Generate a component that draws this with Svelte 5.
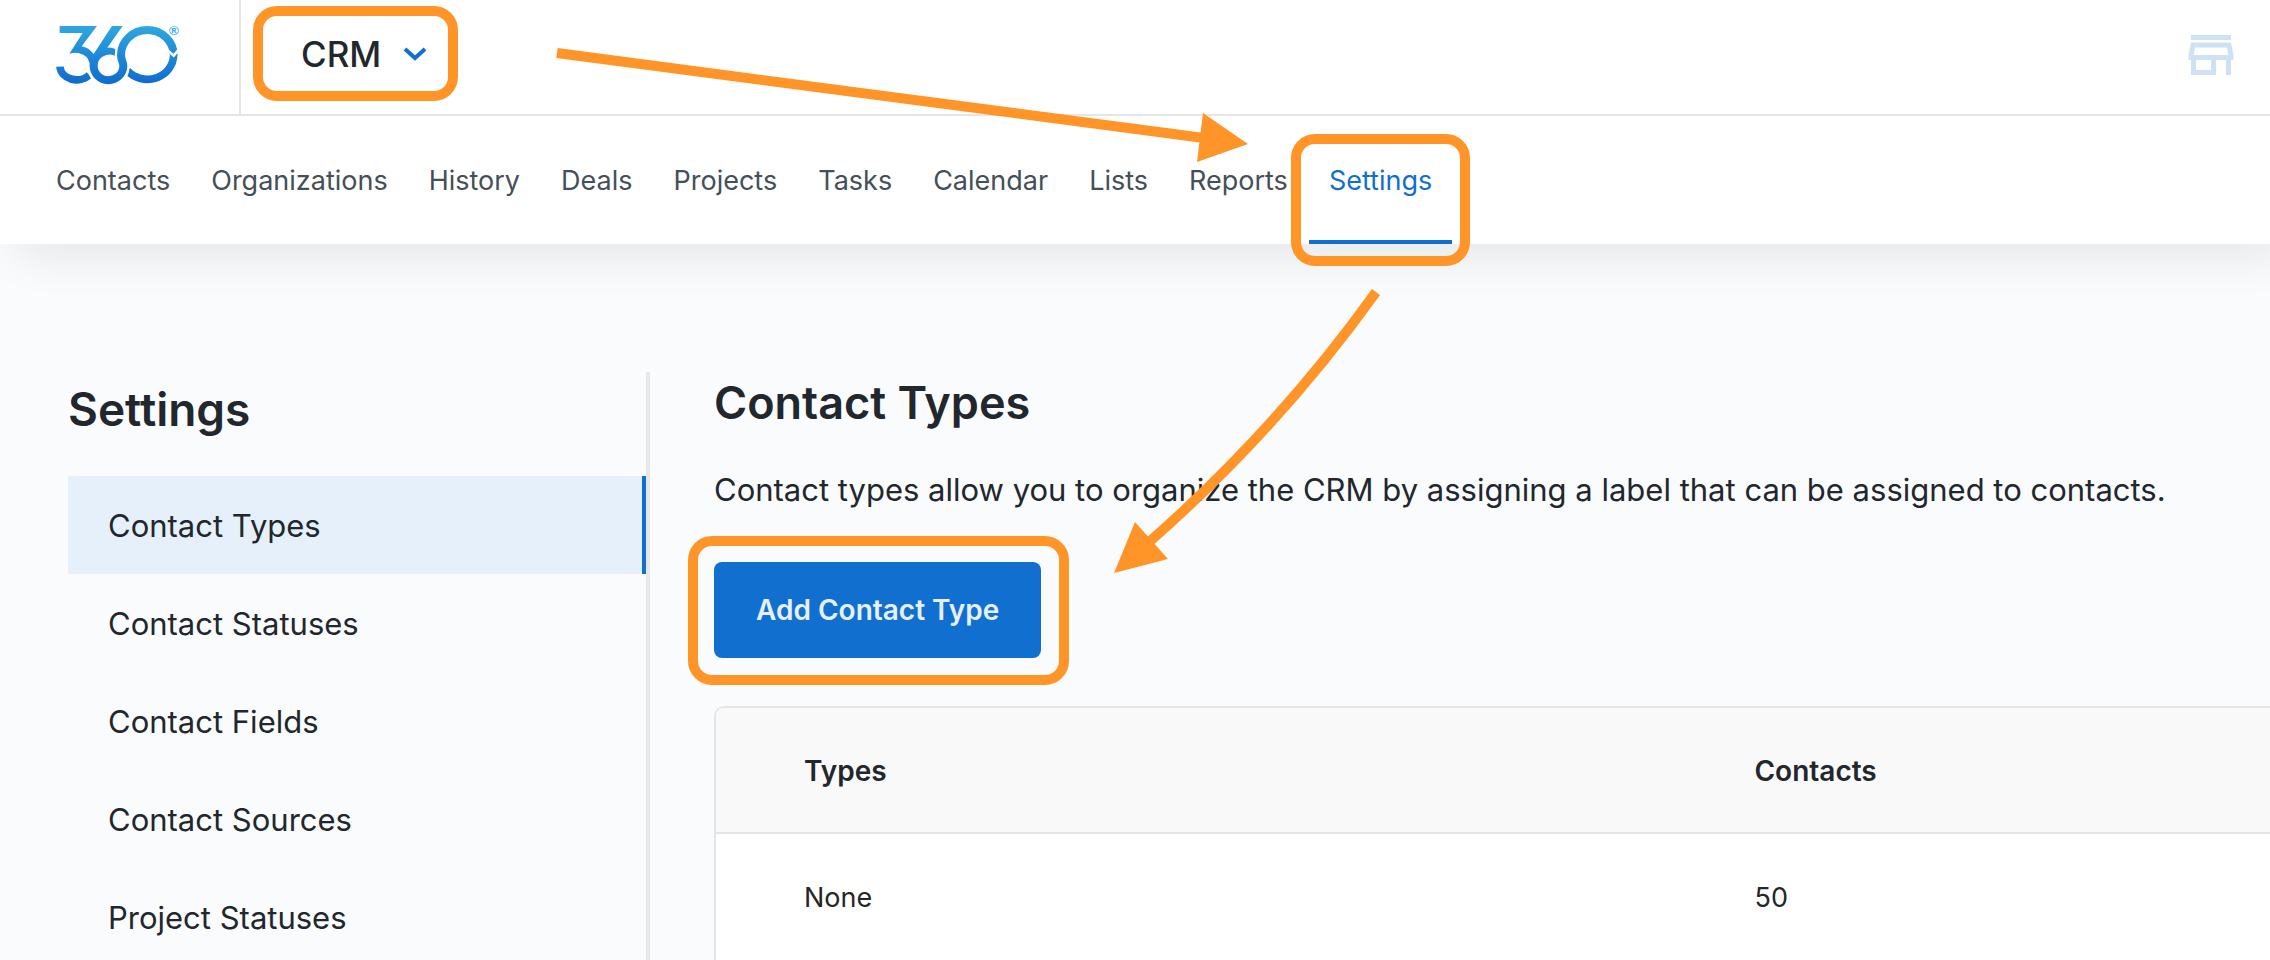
<script>
  const tabs = [
    'Contacts',
    'Organizations',
    'History',
    'Deals',
    'Projects',
    'Tasks',
    'Calendar',
    'Lists',
    'Reports',
    'Settings'
  ];

  const sections = [
    'Contact Types',
    'Contact Statuses',
    'Contact Fields',
    'Contact Sources',
    'Project Statuses'
  ];

  const types = [{ name: 'None', contacts: 50 }];

  let activeTab = $state('Settings');
  let activeSection = $state('Contact Types');
</script>

<div class="page">
  <header class="topbar">
    <a class="brand" href="#home" aria-label="360 home">
      <svg class="logo" viewBox="168 63 384 216" fill="none" aria-hidden="true">
        <defs>
          <linearGradient id="brand" gradientUnits="userSpaceOnUse" x1="0" y1="78" x2="0" y2="250">
            <stop offset="0" stop-color="#2ea8e0" />
            <stop offset="1" stop-color="#106cd0" />
          </linearGradient>
        </defs>
        <g stroke="url(#brand)" stroke-width="23">
          <path d="M180 200A50 41 0 0 0 268 225" />
          <path d="M521 165A79 74 0 0 1 382 212" />
        </g>
        <path d="M281 206A44 42 0 0 0 370 198L364 184" stroke="#fff" stroke-width="36" />
        <path
          d="M281 196A44 43 0 0 0 370 198C370 186 363 180 363 165A79 75 0 0 1 521 165"
          stroke="url(#brand)"
          stroke-width="24"
        />
        <path
          d="M179 78H291L245 139Q266 143 281 162L336 78H368L322 143Q334 141 346 147L344 167Q324 158 306 171Q293 180 293 198H269Q270 175 250 164Q230 154 208 161L248 99H179Z"
          fill="url(#brand)"
        />
        <path d="M498 147L521 167L540 145" stroke="#fff" stroke-width="8" />
        <text class="mark" x="507" y="106">®</text>
      </svg>
    </a>
    <button class="switcher" type="button">
      CRM
      <svg class="chevron" viewBox="0 0 24 14" fill="none" aria-hidden="true">
        <path d="M2 2L12 11L22 2" stroke="currentColor" stroke-width="4" />
      </svg>
    </button>
    <a class="store" href="#marketplace" aria-label="Marketplace">
      <svg viewBox="0 0 24 24" fill="currentColor" aria-hidden="true">
        <path d="M18.36 9l.6 3H5.04l.6-3h12.72M20 4H4v2h16V4zm0 3H4l-1 5v2h1v6h10v-6h4v6h2v-6h1v-2l-1-5zM6 18v-4h6v4H6z" />
      </svg>
    </a>
  </header>

  <nav class="tabs" aria-label="CRM">
    {#each tabs as tab}
      <a
        class="tab"
        class:active={tab === activeTab}
        href="#{tab.toLowerCase()}"
        onclick={() => (activeTab = tab)}
      >
        {tab}
      </a>
    {/each}
  </nav>

  <div class="content">
    <aside class="sidebar">
      <h2>Settings</h2>
      <nav class="sections" aria-label="Settings">
        {#each sections as section}
          <a
            class="section"
            class:active={section === activeSection}
            href="#{section.toLowerCase().replace(' ', '-')}"
            onclick={() => (activeSection = section)}
          >
            {section}
          </a>
        {/each}
      </nav>
    </aside>

    <main>
      <h1>Contact Types</h1>
      <p>Contact types allow you to organize the CRM by assigning a label that can be assigned to contacts.</p>
      <div class="action">
        <button class="add" type="button">Add Contact Type</button>
      </div>
      <div class="panel">
        <table>
          <thead>
            <tr>
              <th class="name" scope="col">Types</th>
              <th scope="col">Contacts</th>
            </tr>
          </thead>
          <tbody>
            {#each types as type}
              <tr>
                <td>{type.name}</td>
                <td>{type.contacts}</td>
              </tr>
            {/each}
          </tbody>
        </table>
      </div>
    </main>
  </div>

  <!-- Walkthrough arrows: CRM menu, Settings tab, add button -->
  <svg class="arrows" viewBox="0 0 1500 600" fill="none" aria-hidden="true">
    <g stroke="#ff9529" stroke-width="10">
      <path d="M557 53L1204 138" />
      <path d="M1376 292Q1278 429 1148 543" />
    </g>
    <g fill="#ff9529">
      <path d="M1203 113L1248 144L1197 162Z" />
      <path d="M1135 522L1168 559L1114 573Z" />
    </g>
  </svg>
</div>

<style>
  :global(body) {
    margin: 0;
    background: #fafbfd;
  }

  .page {
    --blue: #116fcf;
    --ink: #22272e;
    --line: #e5e5e6;
    --orange: #ff9529;
    position: relative;
    display: flex;
    flex-direction: column;
    min-height: 100vh;
    overflow-x: hidden;
    color: var(--ink);
    font-family: Inter, 'Liberation Sans', sans-serif;
    font-size: 27px;
  }

  a {
    color: inherit;
    text-decoration: none;
  }

  button {
    border: 0;
    font-family: inherit;
    cursor: pointer;
  }

  /* Top bar */
  .topbar {
    position: relative;
    z-index: 1;
    display: flex;
    align-items: center;
    height: 114px;
    background: #fff;
    border-bottom: 2px solid var(--line);
  }

  .brand {
    display: flex;
    align-items: center;
    height: 100%;
    padding: 0 55px 0 56px;
    border-right: 2px solid var(--line);
  }

  .logo {
    width: 128px;
    height: 72px;
    overflow: visible;
  }

  .mark {
    fill: #2ea8e0;
    font-family: 'Liberation Sans', sans-serif;
    font-size: 40px;
    font-weight: 700;
  }

  .switcher {
    display: flex;
    align-items: center;
    gap: 22px;
    height: 95px;
    margin: 0 0 7px 12px;
    padding: 0 21px 0 38px;
    border: 10px solid var(--orange);
    border-radius: 24px;
    background: #fff;
    color: var(--ink);
    font-size: 35px;
    font-weight: 500;
  }

  .chevron {
    width: 24px;
    height: 14px;
    color: var(--blue);
  }

  .store {
    display: flex;
    margin-left: auto;
    padding: 0 29px 4px 0;
    color: #cfe2f5;
  }

  .store svg {
    width: 60px;
    height: 60px;
  }

  /* Tabs */
  .tabs {
    position: relative;
    display: flex;
    gap: 1px;
    height: 128px;
    padding: 0 36px;
    background: #fff;
    box-shadow: 16px 14px 44px rgba(0, 0, 0, 0.08);
  }

  .tab {
    position: relative;
    box-sizing: border-box;
    padding: 49px 20px 0;
    border-bottom: 4px solid transparent;
    color: #454f59;
    line-height: 32px;
  }

  .tab.active {
    border-color: var(--blue);
    color: var(--blue);
  }

  .tab.active::after {
    content: '';
    position: absolute;
    inset: 18px -18px -26px;
    border: 10px solid var(--orange);
    border-radius: 24px;
  }

  /* Settings layout */
  .content {
    display: flex;
    flex: 1;
    padding: 128px 0 0 68px;
  }

  .sidebar {
    flex: none;
    width: 578px;
    border-right: 4px solid #e7e7e8;
  }

  h1,
  h2 {
    margin: 0;
    font-size: 45px;
    font-weight: 600;
    line-height: 62px;
  }

  h2 {
    padding: 6px 0 36px;
    font-size: 46px;
  }

  .sections {
    display: flex;
    flex-direction: column;
  }

  .section {
    padding: 30px 36px 28px 40px;
    border-right: 4px solid transparent;
    font-size: 31px;
    line-height: 40px;
  }

  .section.active {
    border-color: var(--blue);
    background: #e5f0fa;
  }

  main {
    flex: 1;
    min-width: 0;
    padding-left: 64px;
  }

  p {
    margin: 36px 0 52px;
    font-size: 31px;
    line-height: 40px;
  }

  .action {
    position: relative;
    width: max-content;
  }

  .action::after {
    content: '';
    position: absolute;
    inset: -26px -28px -27px -26px;
    border: 10px solid var(--orange);
    border-radius: 24px;
    pointer-events: none;
  }

  .add {
    height: 96px;
    padding: 0 42px;
    border-radius: 8px;
    background: var(--blue);
    color: #e5f0fa;
    font-size: 28px;
    font-weight: 600;
  }

  /* Table runs off the right edge */
  .panel {
    margin-top: 48px;
    overflow: hidden;
    border: 2px solid var(--line);
    border-right: 0;
    border-bottom: 0;
    border-radius: 10px 0 0 0;
    background: #fff;
  }

  table {
    width: 100%;
    border-collapse: collapse;
    table-layout: fixed;
  }

  th,
  td {
    padding: 47px 0 45px 88px;
    line-height: 32px;
    text-align: left;
  }

  th {
    background: #f9f9f9;
    border-bottom: 2px solid var(--line);
    font-size: 28px;
    font-weight: 600;
  }

  td {
    padding: 48px 0 46px 88px;
    color: #262626;
  }

  .name {
    width: 55.5%;
  }

  .arrows {
    position: absolute;
    z-index: 2;
    top: 0;
    left: 0;
    width: 1500px;
    height: 600px;
    pointer-events: none;
  }
</style>
